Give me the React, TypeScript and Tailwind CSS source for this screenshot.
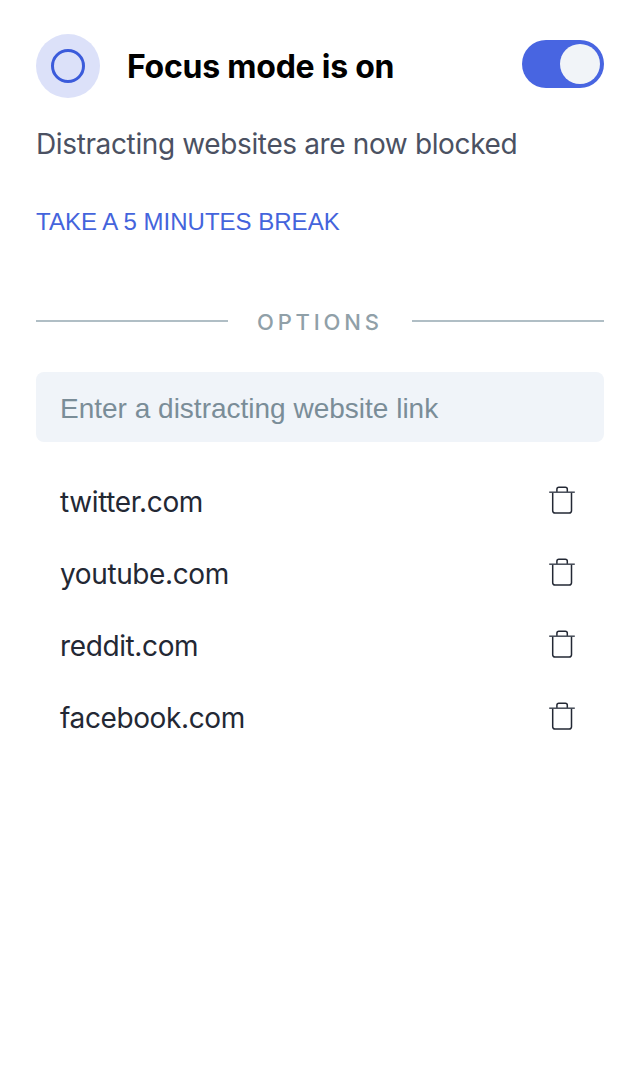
function TrashIcon() {
  return (
    <svg className="block h-8 w-7" viewBox="0 0 28 32" fill="none" stroke="#232834" strokeWidth="1.5">
      <path d="M4.7 8V26.8a2.2 2.2 0 0 0 2.2 2.2h14.4a2.2 2.2 0 0 0 2.2-2.2V8M8.9 8V5.2c0-1.2.8-2 2-2h6.4c1.2 0 2 .8 2 2v2.8" />
      <path d="M1.2 8.2H26.8" stroke="#454b57" />
    </svg>
  );
}

const sites = ["twitter.com", "youtube.com", "reddit.com", "facebook.com"];

export default function App() {
  return (
    <main className="flex h-[1074px] w-[636px] flex-col bg-white pt-[34px] pr-8 pl-9 font-['Inter',sans-serif]">
      <header className="flex h-16 items-center">
        <div className="flex size-16 items-center justify-center rounded-full bg-[#dce1f9]">
          <div className="size-[34px] rounded-full border-[3px] border-[#3b5bdb]" />
        </div>
        <h1 className="mt-0.5 ml-[27px] text-[32px] leading-10 font-bold tracking-[-0.24px] whitespace-nowrap text-black">Focus mode is on</h1>
        <button className="mb-1 ml-auto flex h-12 w-[82px] items-center justify-end rounded-full bg-[#4865e1] p-1" aria-label="Focus mode">
          <span className="size-10 rounded-full bg-[#f1f4f8]" />
        </button>
      </header>
      <p className="mt-[26px] text-[28px] leading-10 tracking-[-0.37px] whitespace-nowrap text-[#4b5162]">Distracting websites are now blocked</p>
      <button className="mt-[38px] self-start font-['Liberation_Sans',sans-serif] text-[24px] leading-10 whitespace-nowrap text-[#4464dc]">TAKE A 5 MINUTES BREAK</button>
      <div className="mt-[59px] flex h-10 items-center">
        <div className="h-0.5 w-48 bg-[#b0bec5]" />
        <span className="mt-0.5 flex-1 pl-[29px] text-[22px] font-medium tracking-[3.8px] whitespace-nowrap text-[#90a0a8]">OPTIONS</span>
        <div className="h-0.5 w-48 bg-[#b0bec5]" />
      </div>
      <input className="mt-[31px] h-[70px] shrink-0 rounded-lg bg-[#f0f4f9] px-6 pt-1 font-['Liberation_Sans',sans-serif] text-[28px] text-[#78909c] placeholder:text-[#7a8d98]" placeholder="Enter a distracting website link" />
      <ul className="mt-6">
        {sites.map((site) => (
          <li key={site} className="flex h-[72px] items-center justify-between pr-7 pl-6">
            <span className="text-[28px] leading-10 tracking-[-0.38px] text-[#232834]">{site}</span>
            <button className="mb-1" aria-label={`Remove ${site}`}><TrashIcon /></button>
          </li>
        ))}
      </ul>
    </main>
  );
}
